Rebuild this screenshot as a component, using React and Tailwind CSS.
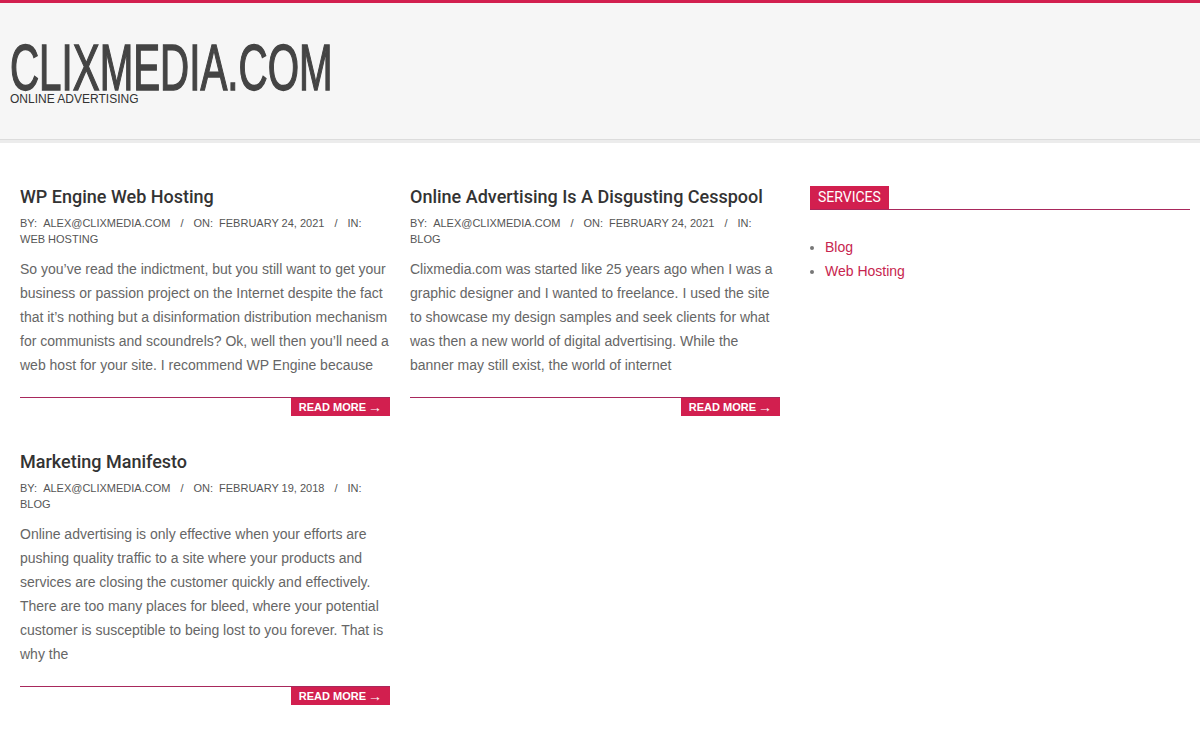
const posts = [
  {
    title: 'WP Engine Web Hosting',
    date: 'February 24, 2021',
    category: 'Web Hosting',
    excerpt:
      'So you’ve read the indictment, but you still want to get your business or passion project on the Internet despite the fact that it’s nothing but a disinformation distribution mechanism for communists and scoundrels? Ok, well then you’ll need a web host for your site. I recommend WP Engine because',
  },
  {
    title: 'Online Advertising Is A Disgusting Cesspool',
    date: 'February 24, 2021',
    category: 'Blog',
    excerpt:
      'Clixmedia.com was started like 25 years ago when I was a graphic designer and I wanted to freelance. I used the site to showcase my design samples and seek clients for what was then a new world of digital advertising. While the banner may still exist, the world of internet',
  },
  {
    title: 'Marketing Manifesto',
    date: 'February 19, 2018',
    category: 'Blog',
    excerpt:
      'Online advertising is only effective when your efforts are pushing quality traffic to a site where your products and services are closing the customer quickly and effectively. There are too many places for bleed, where your potential customer is susceptible to being lost to you forever. That is why the',
  },
];

function Post({ post }) {
  return (
    <article className="flex flex-col">
      <h2
        className="text-[18px] leading-[24px] text-[#333] font-medium"
        style={{ fontFamily: 'Roboto, sans-serif' }}
      >
        {post.title}
      </h2>
      <div className="mt-[6px] text-[11px] leading-[16px] uppercase text-[#555]">
        <span className="mr-[6px]">By:</span>
        <span>alex@clixmedia.com</span>
        <span className="mx-[10px]">/</span>
        <span className="mr-[6px]">On:</span>
        <span>{post.date}</span>
        <span className="mx-[10px]">/</span>
        <span>In:</span>
        <span className="block">{post.category}</span>
      </div>
      <p className="mt-[10px] text-[14px] leading-[24px] text-[#666]">{post.excerpt}</p>
      <div className="mt-[20px] border-t border-[#a8285c] flex justify-end">
        <a className="bg-[#d21f4f] text-white text-[11px] font-bold leading-[18px] h-[18px] pl-[8px] pr-[8px] uppercase flex items-center">
          Read More <span className="ml-[2px] text-[14px] leading-none font-normal">→</span>
        </a>
      </div>
    </article>
  );
}

export default function App() {
  return (
    <div
      className="min-h-[740px] bg-white"
      style={{ fontFamily: '"Liberation Sans", Arial, sans-serif' }}
    >
      <header className="border-t-[3px] border-[#d21f4f] bg-[#f6f6f6]">
        <div className="h-[136px] pt-[38px] px-[10px]">
          <h1 className="text-[64px] leading-[55px] text-[#444] [-webkit-text-stroke:1.5px_#444] inline-block origin-left scale-x-[0.63] whitespace-nowrap">
            CLIXMEDIA.COM
          </h1>
          <p className="-mt-[5px] text-[12px] leading-[14px] text-[#333] uppercase">Online Advertising</p>
        </div>
        <div className="h-[4px] bg-[#ececec] border-t border-[#dcdcdc]" />
      </header>

      <main className="pt-[42px] pl-[20px] pr-[10px] flex gap-[30px]">
        <div className="w-[760px] grid grid-cols-2 gap-x-[20px] gap-y-[34px] content-start">
          {posts.map((post) => (
            <Post key={post.title} post={post} />
          ))}
        </div>

        <aside className="w-[380px] pt-[1px]">
          <div className="border-b border-[#a8285c] flex">
            <h3
              className="bg-[#d21f4f] text-white text-[14px] leading-[23px] px-[8px] uppercase"
              style={{ fontFamily: 'Roboto, sans-serif' }}
            >
              Services
            </h3>
          </div>
          <ul className="mt-[25px] list-disc pl-[15px] text-[14px] leading-[24px] marker:text-[#777]">
            <li>
              <a className="text-[#c7254e]">Blog</a>
            </li>
            <li>
              <a className="text-[#c7254e]">Web Hosting</a>
            </li>
          </ul>
        </aside>
      </main>
    </div>
  );
}
